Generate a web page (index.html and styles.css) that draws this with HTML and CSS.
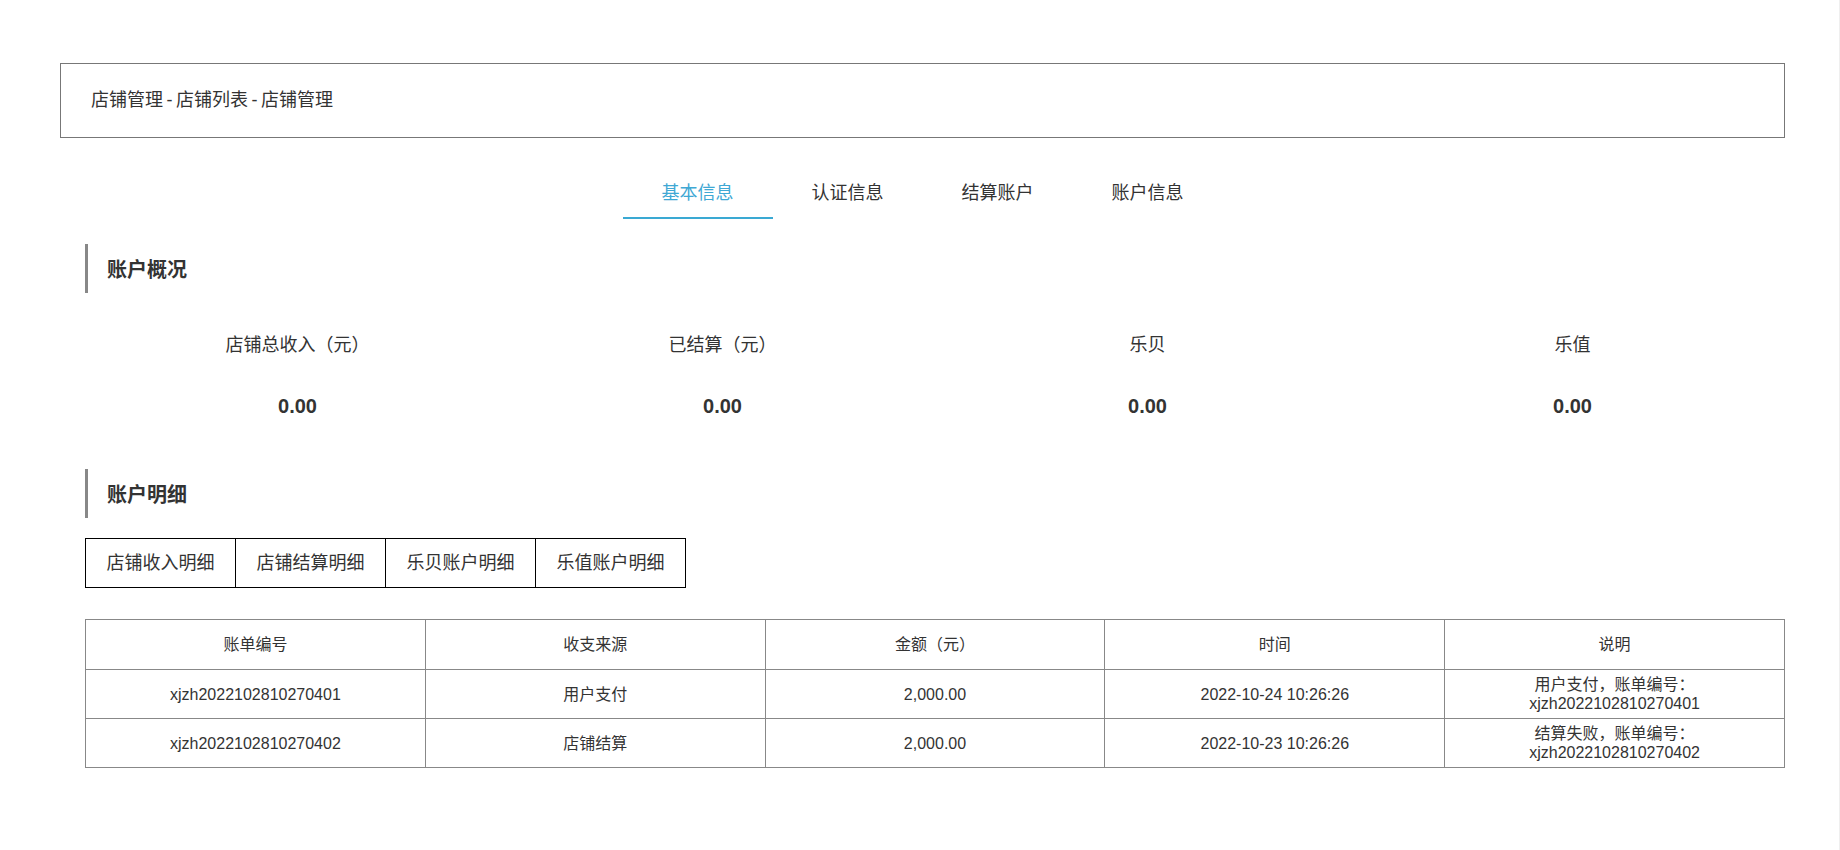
FILE: index.html
```html
<!DOCTYPE html>
<html lang="zh-CN">
<head>
<meta charset="utf-8">
<title>店铺管理</title>
<link rel="stylesheet" href="styles.css">
</head>
<body>
<div class="page">
  <div class="breadcrumb">店铺管理 - 店铺列表 - 店铺管理</div>

  <div class="tabs">
    <div class="tab active">基本信息</div>
    <div class="tab">认证信息</div>
    <div class="tab">结算账户</div>
    <div class="tab">账户信息</div>
  </div>

  <div class="content">
    <div class="section-title first">账户概况</div>
    <div class="stats">
      <div class="stat">
        <div class="stat-label">店铺总收入（元）</div>
        <div class="stat-value">0.00</div>
      </div>
      <div class="stat">
        <div class="stat-label">已结算（元）</div>
        <div class="stat-value">0.00</div>
      </div>
      <div class="stat">
        <div class="stat-label">乐贝</div>
        <div class="stat-value">0.00</div>
      </div>
      <div class="stat">
        <div class="stat-label">乐值</div>
        <div class="stat-value">0.00</div>
      </div>
    </div>

    <div class="section-title second">账户明细</div>
    <div class="btn-group">
      <div class="btn">店铺收入明细</div>
      <div class="btn">店铺结算明细</div>
      <div class="btn">乐贝账户明细</div>
      <div class="btn">乐值账户明细</div>
    </div>

    <table class="detail-table">
      <thead>
        <tr>
          <th>账单编号</th>
          <th>收支来源</th>
          <th>金额（元）</th>
          <th>时间</th>
          <th>说明</th>
        </tr>
      </thead>
      <tbody>
        <tr>
          <td>xjzh2022102810270401</td>
          <td>用户支付</td>
          <td>2,000.00</td>
          <td>2022-10-24 10:26:26</td>
          <td>用户支付，账单编号：xjzh2022102810270401</td>
        </tr>
        <tr>
          <td>xjzh2022102810270402</td>
          <td>店铺结算</td>
          <td>2,000.00</td>
          <td>2022-10-23 10:26:26</td>
          <td>结算失败，账单编号：xjzh2022102810270402</td>
        </tr>
      </tbody>
    </table>
  </div>
</div>
</body>
</html>
```

FILE: styles.css
```css
* {
  box-sizing: border-box;
}

html {
  background: #fff;
}

body {
  margin: 0;
  border-right: 1px solid #efefef;
  min-height: 850px;
  font-family: "Liberation Sans", "Noto Sans CJK SC", sans-serif;
  color: #333;
}

.page {
  width: 1725px;
  margin-left: 60px;
  padding-top: 63px;
}

.breadcrumb {
  height: 75px;
  border: 1px solid #777;
  padding-left: 30px;
  line-height: 73px;
  font-size: 18px;
  word-spacing: -1.5px;
  color: #333;
}

.tabs {
  display: flex;
  justify-content: center;
  margin-top: 43px;
}

.tab {
  width: 150px;
  text-align: center;
  font-size: 18px;
  line-height: 24px;
  padding-bottom: 12px;
  border-bottom: 2px solid transparent;
  color: #333;
}

.tab.active {
  color: #3fa8d4;
  border-bottom-color: #3aa9d3;
}

.content {
  padding-left: 25px;
}

.section-title {
  height: 49px;
  line-height: 53px;
  border-left: 3px solid #888;
  padding-left: 19px;
  font-size: 20px;
  font-weight: bold;
  color: #333;
}

.section-title.first {
  margin-top: 25px;
}

.section-title.second {
  margin-top: 49px;
}

.stats {
  display: grid;
  grid-template-columns: repeat(4, 1fr);
  margin-top: 40px;
}

.stat {
  text-align: center;
}

.stat-label {
  font-size: 18px;
  line-height: 24px;
  color: #333;
}

.stat-value {
  margin-top: 35px;
  font-size: 20px;
  line-height: 28px;
  font-weight: bold;
  color: #333;
}

.btn-group {
  display: flex;
  margin-top: 20px;
}

.btn {
  width: 150px;
  height: 50px;
  line-height: 48px;
  text-align: center;
  font-size: 18px;
  color: #333;
  border: 1px solid #000;
  border-left: none;
}

.btn:first-child {
  width: 151px;
  border-left: 1px solid #000;
}

.detail-table {
  width: 1700px;
  margin-top: 31px;
  border-collapse: collapse;
  table-layout: fixed;
  font-size: 16px;
  line-height: 19px;
  color: #333;
}

.detail-table th,
.detail-table td {
  border: 1px solid #888;
  text-align: center;
  vertical-align: middle;
  padding: 0 12px;
  font-weight: normal;
}

.detail-table th {
  height: 50px;
}

.detail-table td {
  height: 49px;
}
```
